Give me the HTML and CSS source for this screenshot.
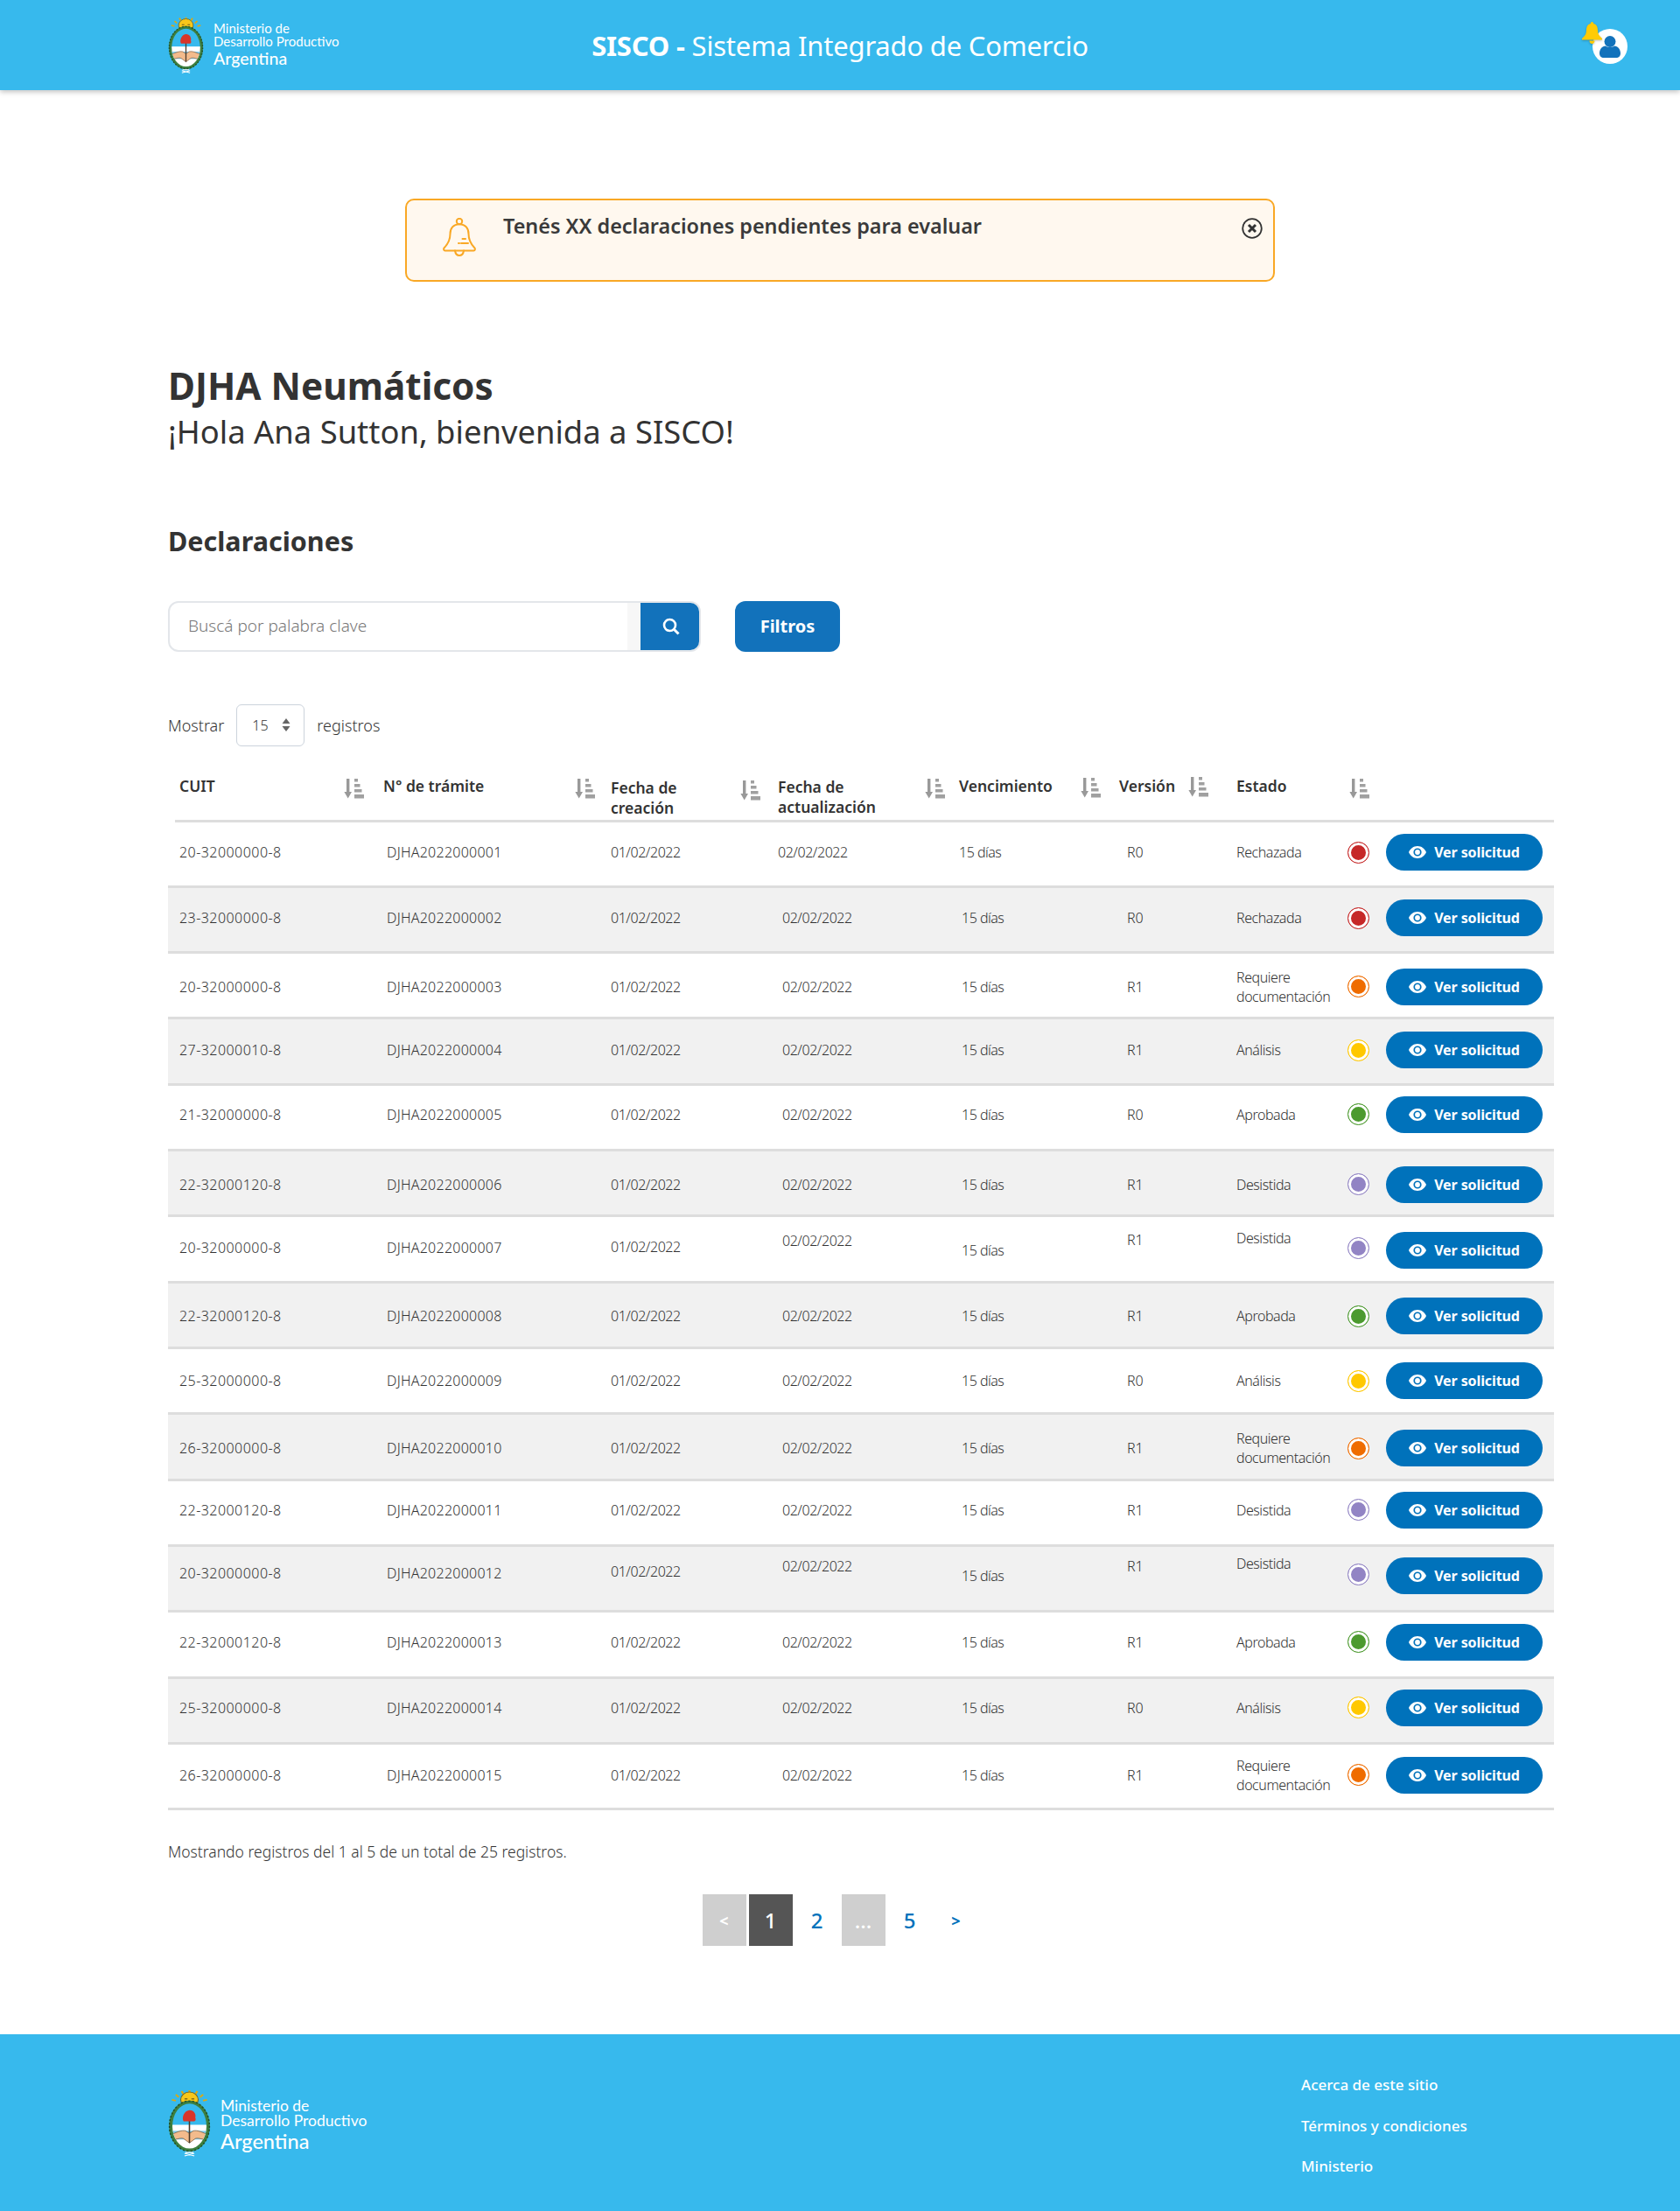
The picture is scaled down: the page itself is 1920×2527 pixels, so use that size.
FILE: index.html
```html
<!DOCTYPE html>
<html lang="es">
<head>
<meta charset="utf-8">
<title>SISCO - Sistema Integrado de Comercio</title>
<link rel="stylesheet" href="styles.css">
</head>
<body>

<svg class="defs" width="0" height="0">
  <symbol id="escudo" viewBox="2 0 44 78" preserveAspectRatio="none">
    <g stroke="#d9a916" stroke-width="2">
      <path d="M24 1v4M16 2l2 4M32 2l-2 4M10 6l3 3M38 6l-3 3M6 12l4 1M42 12l-4 1"/>
    </g>
    <circle cx="24" cy="12" r="9" fill="#f7c61a" stroke="#6f6a2c" stroke-width="1"/>
    <path d="M19 11h3M26 11h3M21 15h6" stroke="#6b5a1c" stroke-width="1.300"/>
    <ellipse cx="24" cy="42.500" rx="21" ry="29.500" fill="#3d7f3f"/>
    <ellipse cx="24" cy="42.500" rx="20.500" ry="29" fill="none" stroke="#1f4d2a" stroke-width="1.400" stroke-dasharray="2 2"/>
    <clipPath id="escudo-in"><ellipse cx="24" cy="42.500" rx="17.500" ry="26"/></clipPath>
    <g clip-path="url(#escudo-in)">
      <rect y="14" width="48" height="28" fill="#37b9ed"/>
      <rect y="41" width="48" height="30" fill="#fff"/>
      <rect y="48" width="48" height="10" fill="#7fcdf0"/>
      <path d="M6 52c6-3 10-5 14-4l4 3 4-3c4-1 8 1 14 4l-3 6c-4-1-7-2-9-1l-6 5-6-5c-2-1-5 0-9 1z" fill="#f3bb8c" stroke="#7a5a3c" stroke-width=".7"/>
    </g>
    <path d="M24 36v26" stroke="#4a3a2a" stroke-width="1.400"/>
    <path d="M18 37c-2-4 0-12 6-13 5 0 7 5 6 9 1 2 0 4-1 4z" fill="#d8352a"/>
    <path d="M20 73h8M19 77l10-3M29 77l-10-3" stroke="#fff" stroke-width="1.200"/>
  </symbol>
  <symbol id="orden" viewBox="0 0 23 23">
    <path d="M3 0h3.400v15H9l-4.300 7.500L.4 15H3z" fill="#999"/>
    <path d="M12 0h4v3.500h-4zM12 6h6.500v3.500H12zM12 12h8.500v3.500H12zM12 18h11v4.500H12z" fill="#a0a0a0"/>
  </symbol>
  <symbol id="ojo" viewBox="0 0 20 14">
    <path d="M10 0C5.500 0 1.800 2.800 0 7c1.800 4.200 5.500 7 10 7s8.200-2.800 10-7c-1.800-4.200-5.500-7-10-7zm0 11.600A4.600 4.600 0 1 1 10 2.400a4.600 4.600 0 0 1 0 9.200z" fill="#fff"/>
    <circle cx="10" cy="7" r="2.900" fill="#fff"/>
  </symbol>
</svg>

<header class="topbar">
  <div class="logo">
    <svg class="logo-escudo"><use href="#escudo"/></svg>
    <div class="logo-text">
      <span>Ministerio de</span>
      <span>Desarrollo Productivo</span>
      <strong>Argentina</strong>
    </div>
  </div>
  <h1 class="app-title"><b>SISCO -</b> Sistema Integrado de Comercio</h1>
  <div class="user">
    <span class="user-circle">
      <svg width="24" height="25" viewBox="0 0 24 25"><circle cx="12" cy="6.500" r="6.500" fill="#1272bb"/><path d="M0 20c0-5 3-8 7-8.500 3 2 7 2 10 0 4 .5 7 3.500 7 8.500 0 3-2 5-5 5H5c-3 0-5-2-5-5z" fill="#1272bb"/></svg>
    </span>
    <svg class="user-bell" width="23" height="25" viewBox="0 0 23 25"><path d="M11.500 0c1 0 1.700.8 1.700 1.900 3.500.9 4.800 4 4.800 7.600 0 4 1.500 6.500 5 9.500v1.500H0V19c3.500-3 5-5.500 5-9.500 0-3.600 1.300-6.700 4.800-7.600 0-1.100.7-1.900 1.700-1.900zM8.500 21.500h6c0 2-1.300 3.500-3 3.500s-3-1.500-3-3.500z" fill="#ffcb05"/></svg>
  </div>
</header>

<main class="container">
  <div class="alert">
    <svg class="alert-bell" width="38" height="44" viewBox="0 0 38 44" fill="none" stroke="#f9a825" stroke-width="2" stroke-linecap="round" stroke-linejoin="round">
      <circle cx="19" cy="4" r="3.200"/>
      <path d="M19 7.200c-7 0-10.500 5-10.500 11 0 7-2 11-6.800 16-1 1.300-.8 3.300 1 3.300h32.600c1.800 0 2-2 1-3.300-4.800-5-6.800-9-6.800-16 0-6-3.500-11-10.500-11z"/>
      <path d="M14 37.500c.5 3.500 2.500 5.500 5 5.500s4.500-2 5-5.500M26 24h-3.500M29 29h-8M19 29h-1"/>
    </svg>
    <p class="alert-text">Tenés XX declaraciones pendientes para evaluar</p>
    <svg class="alert-close" width="24" height="24" viewBox="0 0 24 24" fill="none" stroke="#333"><circle cx="12" cy="12" r="10.800" stroke-width="1.800"/><path d="M8 8l8 8M16 8l-8 8" stroke-width="3"/></svg>
  </div>

  <h2 class="page-title">DJHA Neumáticos</h2>
  <p class="page-sub">¡Hola Ana Sutton, bienvenida a SISCO!</p>

  <h3 class="section-title">Declaraciones</h3>

  <div class="tools">
    <div class="search">
      <span class="search-input">Buscá por palabra clave</span>
      <span class="search-gap"></span>
      <span class="search-btn">
        <svg width="20" height="20" viewBox="0 0 20 20" fill="none" stroke="#fff"><circle cx="8.500" cy="8.500" r="6.500" stroke-width="2.600"/><path d="M13.500 13.500l5 5" stroke-width="3"/></svg>
      </span>
    </div>
    <a class="btn-filtros">Filtros</a>
  </div>

  <div class="show-row">
    <span>Mostrar</span>
    <span class="select">15
      <svg width="10" height="15" viewBox="0 0 10 15"><path d="M5 0l4.500 6H.5zM5 15L.5 9h9z" fill="#666"/></svg>
    </span>
    <span>registros</span>
  </div>

  <table class="grid">
    <colgroup>
      <col class="c1"><col class="c2"><col class="c3"><col class="c4"><col class="c5"><col class="c6"><col class="c7"><col class="c8">
    </colgroup>
    <thead>
      <tr>
        <th><div class="th th1"><span>CUIT</span><svg class="sort"><use href="#orden"/></svg></div></th>
        <th><div class="th th2"><span>N° de trámite</span><svg class="sort"><use href="#orden"/></svg></div></th>
        <th><div class="th th3"><span>Fecha de<br>creación</span><svg class="sort"><use href="#orden"/></svg></div></th>
        <th><div class="th th4"><span>Fecha de<br>actualización</span><svg class="sort"><use href="#orden"/></svg></div></th>
        <th><div class="th th5"><span>Vencimiento</span><svg class="sort"><use href="#orden"/></svg></div></th>
        <th><div class="th th6"><span>Versión</span><svg class="sort"><use href="#orden"/></svg></div></th>
        <th><div class="th th7"><span>Estado</span><svg class="sort"><use href="#orden"/></svg></div></th>
        <th></th>
      </tr>
    </thead>
    <tbody>
      <tr class="rm1">
        <td class="cuit">20-32000000-8</td><td class="tram">DJHA2022000001</td><td class="fec">01/02/2022</td><td class="act first">02/02/2022</td><td class="ven first">15 días</td><td class="ver">R0</td>
        <td class="est"><div class="estado"><span>Rechazada</span><i class="dot red"></i></div></td>
        <td class="acc"><a class="btn-ver"><svg width="20" height="14"><use href="#ojo"/></svg>Ver solicitud</a></td>
      </tr>
      <tr class="rm1">
        <td class="cuit">23-32000000-8</td><td class="tram">DJHA2022000002</td><td class="fec">01/02/2022</td><td class="act">02/02/2022</td><td class="ven">15 días</td><td class="ver">R0</td>
        <td class="est"><div class="estado"><span>Rechazada</span><i class="dot red"></i></div></td>
        <td class="acc"><a class="btn-ver"><svg width="20" height="14"><use href="#ojo"/></svg>Ver solicitud</a></td>
      </tr>
      <tr class="rp1">
        <td class="cuit">20-32000000-8</td><td class="tram">DJHA2022000003</td><td class="fec">01/02/2022</td><td class="act">02/02/2022</td><td class="ven">15 días</td><td class="ver">R1</td>
        <td class="est"><div class="estado"><span>Requiere<br>documentación</span><i class="dot orange"></i></div></td>
        <td class="acc"><a class="btn-ver"><svg width="20" height="14"><use href="#ojo"/></svg>Ver solicitud</a></td>
      </tr>
      <tr class="rm1">
        <td class="cuit">27-32000010-8</td><td class="tram">DJHA2022000004</td><td class="fec">01/02/2022</td><td class="act">02/02/2022</td><td class="ven">15 días</td><td class="ver">R1</td>
        <td class="est"><div class="estado"><span>Análisis</span><i class="dot yellow"></i></div></td>
        <td class="acc"><a class="btn-ver"><svg width="20" height="14"><use href="#ojo"/></svg>Ver solicitud</a></td>
      </tr>
      <tr class="rm3">
        <td class="cuit">21-32000000-8</td><td class="tram">DJHA2022000005</td><td class="fec">01/02/2022</td><td class="act">02/02/2022</td><td class="ven">15 días</td><td class="ver">R0</td>
        <td class="est"><div class="estado"><span>Aprobada</span><i class="dot green"></i></div></td>
        <td class="acc"><a class="btn-ver"><svg width="20" height="14"><use href="#ojo"/></svg>Ver solicitud</a></td>
      </tr>
      <tr class="rp1">
        <td class="cuit">22-32000120-8</td><td class="tram">DJHA2022000006</td><td class="fec">01/02/2022</td><td class="act">02/02/2022</td><td class="ven">15 días</td><td class="ver">R1</td>
        <td class="est"><div class="estado"><span>Desistida</span><i class="dot purple"></i></div></td>
        <td class="acc"><a class="btn-ver"><svg width="20" height="14"><use href="#ojo"/></svg>Ver solicitud</a></td>
      </tr>
      <tr class="rp1">
        <td class="cuit pb6">20-32000000-8</td><td class="tram pb6">DJHA2022000007</td><td class="fec pb9">01/02/2022</td><td class="act pb23">02/02/2022</td><td class="ven">15 días</td><td class="ver pb25">R1</td>
        <td class="est pb29"><div class="estado"><span>Desistida</span><i class="dot purple d23"></i></div></td>
        <td class="acc"><a class="btn-ver"><svg width="20" height="14"><use href="#ojo"/></svg>Ver solicitud</a></td>
      </tr>
      <tr class="rp1">
        <td class="cuit">22-32000120-8</td><td class="tram">DJHA2022000008</td><td class="fec">01/02/2022</td><td class="act">02/02/2022</td><td class="ven">15 días</td><td class="ver">R1</td>
        <td class="est"><div class="estado"><span>Aprobada</span><i class="dot green"></i></div></td>
        <td class="acc"><a class="btn-ver"><svg width="20" height="14"><use href="#ojo"/></svg>Ver solicitud</a></td>
      </tr>
      <tr>
        <td class="cuit">25-32000000-8</td><td class="tram">DJHA2022000009</td><td class="fec">01/02/2022</td><td class="act">02/02/2022</td><td class="ven">15 días</td><td class="ver">R0</td>
        <td class="est"><div class="estado"><span>Análisis</span><i class="dot yellow"></i></div></td>
        <td class="acc"><a class="btn-ver"><svg width="20" height="14"><use href="#ojo"/></svg>Ver solicitud</a></td>
      </tr>
      <tr class="rp1">
        <td class="cuit">26-32000000-8</td><td class="tram">DJHA2022000010</td><td class="fec">01/02/2022</td><td class="act">02/02/2022</td><td class="ven">15 días</td><td class="ver">R1</td>
        <td class="est"><div class="estado"><span>Requiere<br>documentación</span><i class="dot orange"></i></div></td>
        <td class="acc"><a class="btn-ver"><svg width="20" height="14"><use href="#ojo"/></svg>Ver solicitud</a></td>
      </tr>
      <tr class="rm3">
        <td class="cuit">22-32000120-8</td><td class="tram">DJHA2022000011</td><td class="fec">01/02/2022</td><td class="act">02/02/2022</td><td class="ven">15 días</td><td class="ver">R1</td>
        <td class="est"><div class="estado"><span>Desistida</span><i class="dot purple"></i></div></td>
        <td class="acc"><a class="btn-ver"><svg width="20" height="14"><use href="#ojo"/></svg>Ver solicitud</a></td>
      </tr>
      <tr class="rm3">
        <td class="cuit pb13">20-32000000-8</td><td class="tram pb13">DJHA2022000012</td><td class="fec pb16">01/02/2022</td><td class="act pb29">02/02/2022</td><td class="ven">15 días</td><td class="ver pb29">R1</td>
        <td class="est pb35"><div class="estado"><span>Desistida</span><i class="dot purple d26"></i></div></td>
        <td class="acc"><a class="btn-ver"><svg width="20" height="14"><use href="#ojo"/></svg>Ver solicitud</a></td>
      </tr>
      <tr class="rm3">
        <td class="cuit">22-32000120-8</td><td class="tram">DJHA2022000013</td><td class="fec">01/02/2022</td><td class="act">02/02/2022</td><td class="ven">15 días</td><td class="ver">R1</td>
        <td class="est"><div class="estado"><span>Aprobada</span><i class="dot green"></i></div></td>
        <td class="acc"><a class="btn-ver"><svg width="20" height="14"><use href="#ojo"/></svg>Ver solicitud</a></td>
      </tr>
      <tr class="rm3">
        <td class="cuit">25-32000000-8</td><td class="tram">DJHA2022000014</td><td class="fec">01/02/2022</td><td class="act">02/02/2022</td><td class="ven">15 días</td><td class="ver">R0</td>
        <td class="est"><div class="estado"><span>Análisis</span><i class="dot yellow"></i></div></td>
        <td class="acc"><a class="btn-ver"><svg width="20" height="14"><use href="#ojo"/></svg>Ver solicitud</a></td>
      </tr>
      <tr class="rm1">
        <td class="cuit">26-32000000-8</td><td class="tram">DJHA2022000015</td><td class="fec">01/02/2022</td><td class="act">02/02/2022</td><td class="ven">15 días</td><td class="ver">R1</td>
        <td class="est"><div class="estado"><span>Requiere<br>documentación</span><i class="dot orange"></i></div></td>
        <td class="acc"><a class="btn-ver"><svg width="20" height="14"><use href="#ojo"/></svg>Ver solicitud</a></td>
      </tr>
    </tbody>
  </table>

  <p class="count">Mostrando registros del 1 al 5 de un total de 25 registros.</p>

  <nav class="pager">
    <a class="off arrow">&lt;</a>
    <a class="on">1</a>
    <a>2</a>
    <a class="off">...</a>
    <a>5</a>
    <a class="arrow">&gt;</a>
  </nav>
</main>

<footer class="foot">
  <div class="logo logo-big">
    <svg class="logo-escudo"><use href="#escudo"/></svg>
    <div class="logo-text">
      <span>Ministerio de</span>
      <span>Desarrollo Productivo</span>
      <strong>Argentina</strong>
    </div>
  </div>
  <ul class="foot-links">
    <li>Acerca de este sitio</li>
    <li>Términos y condiciones</li>
    <li>Ministerio</li>
  </ul>
</footer>

</body>
</html>
```

FILE: styles.css
```css
* {
    box-sizing: border-box;
}
body {
    margin: 0;
    font-family: "Noto Sans", "Open Sans", sans-serif;
    color: #333;
    background: #fff;
}
.defs {
    display: block;
    height: 0;
}

/* header */
.topbar {
    height: 103px;
    background: #37b9ed;
    box-shadow: 0 2px 6px rgba(0,0,0,.25);
    display: grid;
    grid-template-columns: 1fr auto 1fr;
    align-items: center;
    padding: 0 60px;
}
.topbar .logo {
    margin-left: 132px;
}
.logo {
    display: flex;
    align-items: center;
    color: #fff;
}
.logo-escudo {
    flex: none;
    width: 41px;
    height: 65px;
    margin-right: 11px;
}
.logo-text {
    display: flex;
    flex-direction: column;
    font-family: "Lato", "Noto Sans", sans-serif;
    font-size: 15px;
    line-height: 15px;
    white-space: nowrap;
}
.logo-text strong {
    font-size: 19.500px;
    font-weight: 500;
    line-height: 24px;
}
.app-title {
    margin: 0;
    color: #fff;
    font-size: 31px;
    letter-spacing: -.2px;
    font-weight: 400;
    white-space: nowrap;
}
.user {
    justify-self: end;
    display: flex;
    position: relative;
    margin-top: 3px;
}
.user-circle {
    width: 40px;
    height: 40px;
    border-radius: 50%;
    background: #fff;
    display: flex;
    align-items: center;
    justify-content: center;
}
.user-bell {
    position: absolute;
    top: -8px;
    left: -12px;
    filter: drop-shadow(0 1px 1px rgba(0,0,0,.25));
}

/* contenido */
.container {
    width: 1536px;
    margin: 0 auto;
}
.alert {
    width: 994px;
    height: 95px;
    margin: 124px auto 0;
    background: #fff8ef;
    border: 2px solid #f9a825;
    border-radius: 10px;
    display: flex;
    align-items: flex-start;
    padding: 20px 12px 0 41px;
}
.alert-bell {
    flex: none;
}
.alert-text {
    flex: 1;
    margin: -7px 0 0 31px;
    font-size: 23.400px;
    font-weight: 600;
    color: #3a3a3a;
}
.alert-close {
    flex: none;
    margin-top: 0;
}
.page-title {
    margin: 92px 0 0;
    font-size: 42.300px;
    line-height: 54px;
    font-weight: 700;
}
.page-sub {
    margin: 0;
    font-size: 36.400px;
    line-height: 50px;
}
.section-title {
    margin: 77.500px 0 0;
    font-size: 30.500px;
    line-height: 44px;
    font-weight: 700;
}
.tools {
    display: flex;
    gap: 39px;
    margin-top: 47px;
}
.search {
    width: 609px;
    height: 58px;
    display: flex;
    border: 2px solid #e3e6ea;
    border-radius: 12px;
    overflow: hidden;
}
.search-input {
    flex: 1;
    padding-left: 21px;
    font-size: 19px;
    line-height: 52px;
    font-weight: 300;
    color: #777;
}
.search-gap {
    width: 15px;
    background: #f7f7f7;
}
.search-btn {
    width: 69px;
    margin: -2px -2px -2px 0;
    background: #1272bb;
    display: flex;
    align-items: center;
    justify-content: center;
}
.btn-filtros {
    width: 120px;
    height: 58px;
    background: #1272bb;
    color: #fff;
    border-radius: 12px;
    font-size: 20px;
    font-weight: 700;
    display: flex;
    align-items: center;
    justify-content: center;
}
.show-row {
    display: flex;
    align-items: center;
    gap: 14px;
    margin-top: 60px;
    font-size: 18px;
    font-weight: 300;
}
.select {
    width: 78px;
    height: 48px;
    border: 1px solid #ccd3dc;
    border-radius: 6px;
    padding: 0 15px 0 17px;
    font-size: 16px;
    display: flex;
    align-items: center;
    justify-content: space-between;
}

/* tabla */
.grid {
    width: 1584px;
    margin-top: 20px;
    border-collapse: separate;
    border-spacing: 0;
    table-layout: fixed;
    font-size: 16px;
    font-weight: 300;
}
.c1 { width: 237px; }
.c2 { width: 261px; }
.c3 { width: 190px; }
.c4 { width: 210px; }
.c5 { width: 178px; }
.c6 { width: 137px; }
.c7 { width: 170px; }
.c8 { width: 201px; }
.grid th {
    height: 67px;
    padding: 0;
    vertical-align: top;
    text-align: left;
    border-bottom: 3px solid #ddd;
    font-size: 17.500px;
    font-weight: 600;
    line-height: 23px;
}
.grid th:first-child {
    border-bottom: 0;
    box-shadow: inset 8px 0 #fff, inset 0 -3px #ddd;
}
.th {
    display: flex;
    justify-content: space-between;
    padding-top: 14px;
}
.sort {
    width: 23px;
    height: 23px;
    flex: none;
    margin-top: 3px;
}
.th1 { padding-left: 13px; padding-right: 13px; }
.th2 { padding-left: 9px; padding-right: 10px; }
.th3 { padding-left: 8px; padding-right: 11px; padding-top: 16px; }
.th4 { padding-left: 9px; padding-right: 10px; padding-top: 15px; }
.th4 .sort { margin-top: 2px; }
.th5 { padding-left: 6px; padding-right: 10px; }
.th5 .sort { margin-top: 2px; }
.th6 { padding-left: 11px; padding-right: 24px; }
.th6 .sort { margin-top: 1px; }
.th7 { padding-left: 8px; padding-right: 10px; }
.grid td {
    height: 75.330px;
    padding: 0;
    vertical-align: middle;
    border-bottom: 3px solid #ddd;
    white-space: nowrap;
}
.grid tbody tr:nth-child(even) td {
    background: #f1f1f1;
}
.grid .cuit { padding-left: 13px; letter-spacing: .45px; }
.grid .tram { padding-left: 13px; letter-spacing: .25px; }
.grid .fec { padding-left: 8px; letter-spacing: -.45px; }
.grid .act { padding-left: 14px; letter-spacing: -.45px; }
.grid .act.first { padding-left: 9px; }
.grid .ven { padding-left: 9px; letter-spacing: -.5px; }
.grid .ven.first { padding-left: 6px; }
.grid .ver { padding-left: 20px; }
.grid .est { padding-left: 8px; padding-right: 10px; letter-spacing: -.45px; }
.grid .acc { padding-left: 9px; }

/* las filas no estan todas centradas igual */
.grid .rm1 td { padding-bottom: 3px; }
.grid .rm3 td { padding-bottom: 6px; }
.grid .rp1 td { padding-top: 3px; }
.grid tr td.pb6 { padding-bottom: 6px; }
.grid tr td.pb9 { padding-bottom: 9px; }
.grid tr td.pb13 { padding-bottom: 13px; }
.grid tr td.pb16 { padding-bottom: 16px; }
.grid tr td.pb23 { padding-bottom: 23px; }
.grid tr td.pb25 { padding-bottom: 25px; }
.grid tr td.pb29 { padding-bottom: 29px; }
.grid tr td.pb35 { padding-bottom: 35px; }

.estado {
    display: flex;
    align-items: center;
    justify-content: space-between;
    line-height: 22px;
}
.dot {
    width: 25px;
    height: 25px;
    flex: none;
    border-radius: 50%;
    border: 1px solid currentColor;
    background: currentColor;
    box-shadow: inset 0 0 0 3px #fff;
}
.dot.d23 { margin-bottom: -23px; }
.dot.d26 { margin-bottom: -26px; }
.red { color: #c62828; }
.orange { color: #ef6c00; }
.yellow { color: #ffc800; }
.green { color: #4c9a2f; }
.purple { color: #9284c4; }
.btn-ver {
    width: 179px;
    height: 42px;
    border-radius: 21px;
    background: #0072bb;
    color: #fff;
    font-size: 16px;
    font-weight: 700;
    letter-spacing: -.1px;
    display: flex;
    align-items: center;
    justify-content: center;
    gap: 9px;
}
.count {
    margin: 35px 0 0;
    font-size: 17.500px;
    font-weight: 300;
    line-height: 24px;
}
.pager {
    display: flex;
    justify-content: center;
    gap: 3px;
    margin-top: 37px;
}
.pager a {
    width: 50px;
    height: 59px;
    display: flex;
    align-items: center;
    justify-content: center;
    font-size: 24px;
    font-weight: 500;
    color: #0072bb;
}
.pager .off {
    background: #cfcfcf;
    color: #fff;
}
.pager .on {
    background: #555;
    color: #fff;
}
.pager .arrow {
    font-size: 18px;
    font-weight: 700;
}

/* footer */
.foot {
    height: 202px;
    margin-top: 101px;
    background: #37b9ed;
    color: #fff;
    display: flex;
    justify-content: space-between;
    padding: 0 0 0 192px;
}
.logo-big {
    padding-top: 63px;
    align-items: flex-start;
}
.logo-big .logo-escudo {
    width: 49px;
    height: 77px;
}
.logo-big .logo-text {
    font-size: 17.500px;
    line-height: 17px;
    padding-top: 10px;
}
.logo-big .logo-text strong {
    font-size: 23.500px;
    line-height: 30px;
}
.foot-links {
    list-style: none;
    width: 433px;
    margin: 44px 0 0;
    padding: 0;
    font-size: 17px;
    line-height: 28px;
    font-weight: 500;
}
.foot-links li {
    margin-bottom: 18.500px;
}
```
